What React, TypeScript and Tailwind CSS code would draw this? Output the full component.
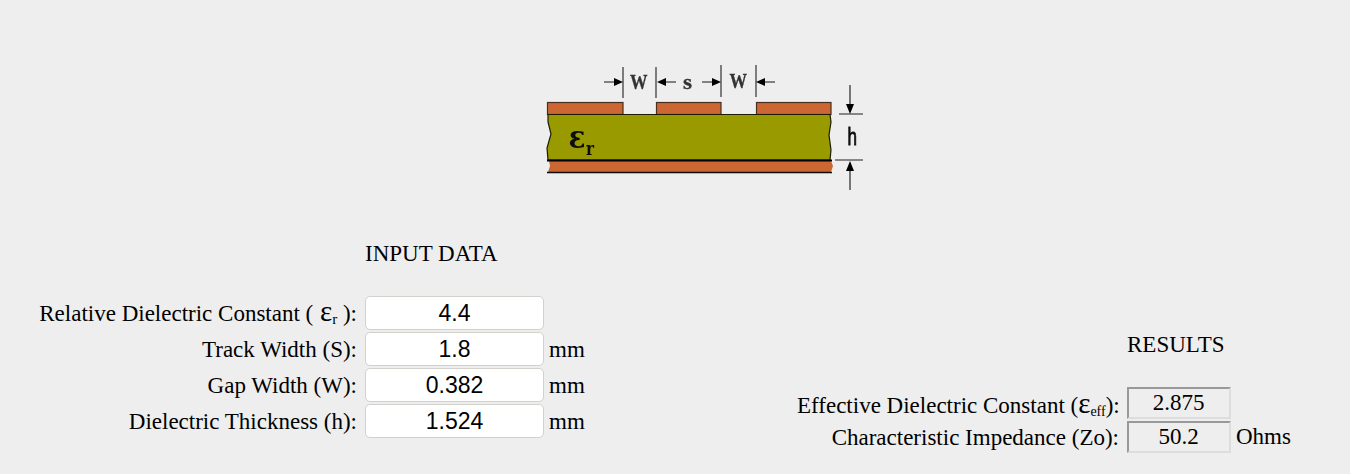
const serif = "font-['Liberation_Serif',serif]";

function Diagram() {
  const s = "'Liberation Serif',serif";
  return (
    <svg width="350" height="140" viewBox="0 0 350 140" className="block">
      <defs>
        <filter id="soft" x="-5%" y="-5%" width="110%" height="110%">
          <feGaussianBlur stdDeviation="0.45" />
        </filter>
      </defs>
      <g filter="url(#soft)">
        {[[17.5, 75.5], [126.5, 64.5], [226.5, 74.5]].map(([x, w]) => (
          <rect key={x} x={x} y={42.5} width={w} height={12} fill="#cc6633" stroke="#4a2f20" strokeWidth="1.2" />
        ))}
        <path d="M18 54.5H300L301 62L299 75L301 90L300 100H18L17 88L21 74L18 62Z" fill="#999900" stroke="#1c1c00" strokeWidth="1.2" />
        <path d="M19 101H301L303 106L301 112H18L20 106Z" fill="#cc6633" />
        <path d="M17 100.5H302" stroke="#000" strokeWidth="1.8" />
        <path d="M17 112.5H302" stroke="#111" strokeWidth="1.6" />
        <path d="M93 7V38M126 7V38M191 5V37M226 5V37M309 54H333M305 100H333" stroke="#222" strokeWidth="1.1" fill="none" />
        <path d="M74 22H86M133 22H146M172 22H184M233 22H245M320 25V46M320 108V130" stroke="#111" strokeWidth="1.1" fill="none" />
        <path d="M93 22L84 18V26ZM127 22L136 18V26ZM191 22L182 18V26ZM226 22L235 18V26ZM320 54L316 44H324ZM320 101L316 111H324Z" fill="#000" />
        <text x="100" y="28.5" textLength="17.5" lengthAdjust="spacingAndGlyphs" fontSize="20" fontWeight="700" stroke="#333" strokeWidth="0.3" fill="#333" fontFamily={s}>W</text>
        <text x="153" y="28.5" textLength="9" lengthAdjust="spacingAndGlyphs" fontSize="21" fontWeight="700" stroke="#333" strokeWidth="0.3" fill="#333" fontFamily={s}>s</text>
        <text x="199.5" y="27.5" textLength="17.5" lengthAdjust="spacingAndGlyphs" fontSize="20" fontWeight="700" stroke="#333" strokeWidth="0.3" fill="#333" fontFamily={s}>W</text>
        <text x="317.5" y="85" textLength="9.5" lengthAdjust="spacingAndGlyphs" fontSize="23" fontWeight="400" stroke="#111" strokeWidth="0.8" fill="#111" fontFamily="'Liberation Sans',sans-serif">h</text>
        <text x="38.5" y="87.5" textLength="17" lengthAdjust="spacingAndGlyphs" fontSize="32" fontWeight="700" fill="#111" fontFamily="'DejaVu Serif',serif">ε</text>
        <text x="56" y="94.5" textLength="8" lengthAdjust="spacingAndGlyphs" fontSize="19" fontWeight="700" fill="#111" fontFamily="'DejaVu Serif',serif">r</text>
      </g>
    </svg>
  );
}

function Field({ value }: { value: string }) {
  return (
    <input
      readOnly
      value={value}
      className="w-[179px] h-[34px] bg-white border border-[#d4d0cc] rounded-[5px] text-center text-[23px] text-black font-['Liberation_Sans',sans-serif] outline-none"
    />
  );
}

function InputRow({ label, value, unit }: { label: React.ReactNode; value: string; unit?: string }) {
  return (
    <div className="flex items-center h-[34px] mb-[2px]">
      <div className="w-[357px] text-right leading-none whitespace-nowrap relative -top-[1px]">{label}</div>
      <div className="ml-2">
        <Field value={value} />
      </div>
      {unit && <span className="ml-[5px]">{unit}</span>}
    </div>
  );
}

function ResultRow({ label, value, unit, offset }: { label: React.ReactNode; value: string; unit?: string; offset: string }) {
  return (
    <div className="flex items-center h-[32px] mb-[2px]">
      <div className={`w-[322px] text-right leading-none whitespace-nowrap relative ${offset}`}>{label}</div>
      <div className="ml-2 w-[104px] h-[32px] pr-[1px] border-2 border-t-[#999999] border-l-[#999999] border-r-[#dddddd] border-b-[#dddddd] text-center leading-[28px]">
        {value}
      </div>
      {unit && <span className="ml-[5px]">{unit}</span>}
    </div>
  );
}

export default function App() {
  return (
    <div className={`w-[1350px] h-[474px] bg-[#eeeeee] text-black text-[23px] overflow-hidden ${serif}`}>
      <div className="pt-[60px] pl-[530px]">
        <Diagram />
      </div>
      <div className="flex">
        <div className="w-[797px] pt-[40px]">
          <div className="pl-[365px] h-[28px] leading-[28px]">INPUT DATA</div>
          <div className="mt-[29px]">
            <InputRow
              label={<>Relative Dielectric Constant ( <span className="text-[29px] leading-[0] ml-[1px]">ε</span><sub className="text-[15px] leading-[0]">r</sub> ):</>}
              value="4.4"
            />
            <InputRow label="Track Width (S):" value="1.8" unit="mm" />
            <InputRow label="Gap Width (W):" value="0.382" unit="mm" />
            <InputRow label="Dielectric Thickness (h):" value="1.524" unit="mm" />
          </div>
        </div>
        <div className="pt-[131px]">
          <div className="pl-[330px] h-[28px] leading-[28px]">RESULTS</div>
          <div className="mt-[28px]">
            <ResultRow
              label={<>Effective Dielectric Constant (<span className="text-[29px] leading-[0]">ε</span><sub className="text-[14px] leading-[0]">eff</sub>):</>}
              value="2.875"
              offset="top-[2px]"
            />
            <ResultRow label="Characteristic Impedance (Zo):" value="50.2" unit="Ohms" offset="top-0" />
          </div>
        </div>
      </div>
    </div>
  );
}
